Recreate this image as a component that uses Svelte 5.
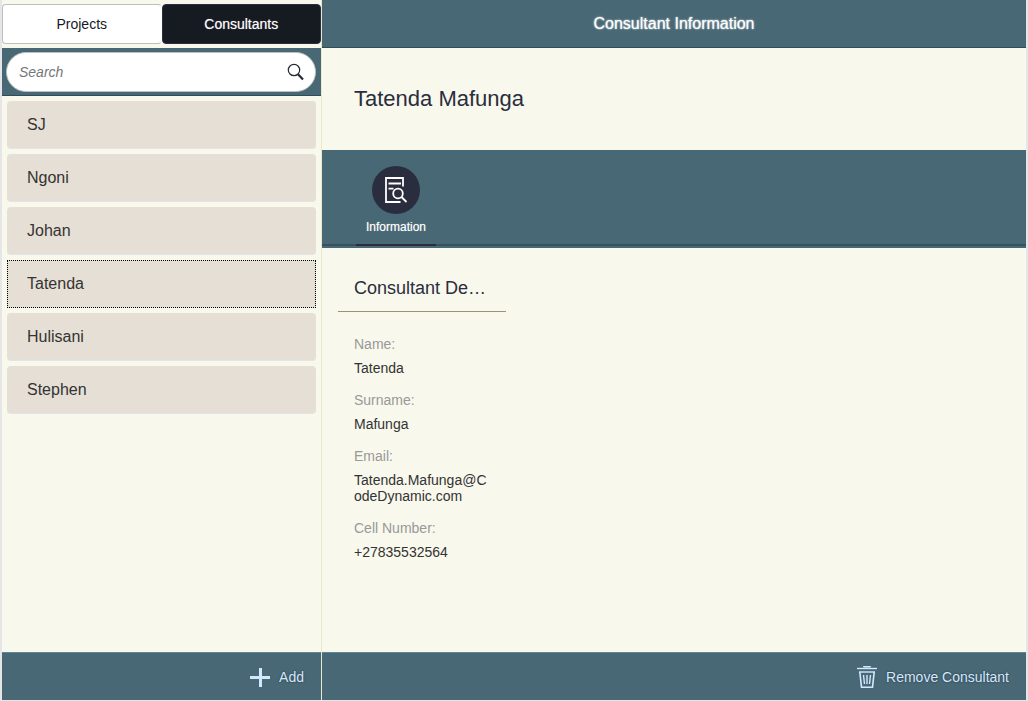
<script>
  let tab = $state('Consultants');
  let selected = $state('Tatenda');
  let query = $state('');
  const tabs = ['Projects', 'Consultants'];
  const people = ['SJ', 'Ngoni', 'Johan', 'Tatenda', 'Hulisani', 'Stephen'];
  const shown = $derived(people.filter((p) => p.toLowerCase().includes(query.toLowerCase())));
  const fields = [
    ['Name:', 'Tatenda'],
    ['Surname:', 'Mafunga'],
    ['Email:', 'Tatenda.Mafunga@CodeDynamic.com'],
    ['Cell Number:', '+27835532564']
  ];
</script>

<div class="app">
  <aside>
    <div class="tabs">
      {#each tabs as t}
        <button class:active={tab === t} onclick={() => (tab = t)}>{t}</button>
      {/each}
    </div>
    <div class="search-bar">
      <label class="search">
        <input type="search" placeholder="Search" aria-label="Search" bind:value={query} />
        <svg width="18" height="18" viewBox="0 0 18 18" fill="none" stroke="#222b33">
          <circle cx="8" cy="7" r="5.7" stroke-width="1.2" />
          <path d="M12 11.2 17 16.5" stroke-width="2.2" />
        </svg>
      </label>
    </div>
    <ul>
      {#each shown as p}
        <li><button class:selected={selected === p} onclick={() => (selected = p)}>{p}</button></li>
      {/each}
    </ul>
    <footer>
      <button class="add">
        <svg width="20" height="20" viewBox="0 0 20 20" stroke="#d1e8ff" stroke-width="3"><path d="M0 10.5H20M10.5 1V20" /></svg>
        Add
      </button>
    </footer>
  </aside>

  <main>
    <header><h1>Consultant Information</h1></header>
    <h2>Tatenda Mafunga</h2>
    <nav>
      <button class="info">
        <span class="disc">
          <svg width="24" height="28" viewBox="0 0 24 28" fill="none" stroke="#fff" stroke-width="1.8">
            <path d="M19 10.5V2H2V26H16.5M4.5 7.5H17M4.5 12.7H9.5" />
            <circle cx="14" cy="17.5" r="4.8" />
            <path d="M17.5 21 22.5 26" />
          </svg>
        </span>
        Information
      </button>
    </nav>
    <section>
      <h3>Consultant Details</h3>
      <dl>
        {#each fields as [label, value]}
          <dt>{label}</dt>
          <dd>{value}</dd>
        {/each}
      </dl>
    </section>
    <footer>
      <button>
        <svg width="20" height="24" viewBox="0 0 20 24" fill="none" stroke="#d1e8ff">
          <path d="M7 2.5V1.8H13V2.5" stroke-width="1.6" />
          <path d="M0 3.5H20" stroke-width="1.4" />
          <path d="M2 7H18" stroke-width="1.4" />
          <path d="M2.8 7 4.5 22.2H15.5L17.2 7" stroke-width="1.6" />
          <path d="M6.5 10 7.5 19M10 10V19M13.5 10 12.5 19" stroke-width="1.4" />
        </svg>
        Remove Consultant
      </button>
    </footer>
  </main>
</div>

<style>
  :global(body) {
    margin: 0;
    background: #e6e6e8;
  }
  .app {
    box-sizing: border-box;
    min-height: 100vh;
    padding: 0 2px 1px;
    display: grid;
    grid-template-columns: 320px minmax(0, 1fr);
    font-family: 'Liberation Sans', Arial, sans-serif;
    font-size: 14px;
    color: #333;
  }
  button,
  input {
    box-sizing: border-box;
    font: inherit;
    cursor: pointer;
  }
  aside,
  main {
    display: flex;
    flex-direction: column;
    background: #f8f8ec;
  }
  aside {
    border-right: 1px solid #e8e9cf;
  }
  .tabs {
    display: flex;
    padding: 4px 0;
  }
  .tabs button {
    flex: 1;
    height: 40px;
    padding: 0;
    border: 1px solid #bfbfbf;
    border-radius: 4px;
    background: #fff;
    color: #16191f;
  }
  .tabs button:first-child {
    border-right-color: #fff;
  }
  .tabs .active {
    background: #161a21;
    border-color: #2a2d3d;
    color: #fff;
    text-shadow: 0 0 1px rgba(255, 255, 255, 0.5);
  }
  .search-bar {
    box-sizing: border-box;
    height: 48px;
    padding: 4px 5px 3px 4px;
    background: #476874;
    border-bottom: 1px solid #2f4c5a;
  }
  .search {
    box-sizing: border-box;
    height: 40px;
    display: flex;
    align-items: center;
    padding: 0 11px 0 12px;
    background: #fff;
    border: 1px solid #bfbfbf;
    border-radius: 20px;
  }
  .search input {
    flex: 1;
    min-width: 0;
    padding: 0;
    border: 0;
    outline: 0;
    background: none;
    appearance: none;
    cursor: text;
  }
  .search input::placeholder {
    color: #74777a;
    font-style: italic;
  }
  ul {
    flex: 1;
    list-style: none;
    margin: 0;
    padding: 5px;
    display: flex;
    flex-direction: column;
    gap: 5px;
  }
  li {
    display: flex;
  }
  li button {
    flex: 1;
    height: 48px;
    padding: 0 20px;
    border: 0;
    border-bottom: 1px solid #e4e4e6;
    border-radius: 4px;
    background: #e6dfd5;
    color: #333;
    font-size: 16px;
    text-align: left;
  }
  li .selected {
    border-radius: 0;
    outline: 1px dotted #000;
    outline-offset: -1px;
  }
  footer {
    box-sizing: border-box;
    height: 48px;
    display: flex;
    justify-content: flex-end;
    align-items: center;
    padding: 0 17px;
    background: #476874;
    border-top: 1px solid #5c8798;
  }
  footer button {
    display: flex;
    align-items: center;
    gap: 9px;
    padding: 0;
    border: 0;
    background: none;
    color: #d1e8ff;
    text-shadow: 0 0 2px #2a2d3d;
  }
  header {
    box-sizing: border-box;
    height: 48px;
    display: flex;
    align-items: center;
    justify-content: center;
    background: #476874;
    border-bottom: 1px solid #2f4c5a;
  }
  h1 {
    margin: 0;
    font-size: 16px;
    font-weight: 400;
    color: #fff;
    text-shadow: 0 0 2px #fff;
  }
  h2 {
    margin: 0;
    padding: 36px 32px;
    font-size: 22px;
    line-height: 30px;
    font-weight: 400;
    color: #2a2d3d;
  }
  nav {
    box-sizing: border-box;
    height: 98px;
    display: flex;
    padding: 0 34px;
    background: linear-gradient(#476874 94px, #34535f 94px, #34535f 96px, #476874 96px);
  }
  .info {
    width: 80px;
    height: 96px;
    display: flex;
    flex-direction: column;
    align-items: center;
    gap: 6px;
    padding: 16px 0 0;
    border: 0;
    border-bottom: 2px solid #2a2d3d;
    background: none;
    color: #fff;
    font-size: 12px;
    text-shadow: 0 0 1px rgba(255, 255, 255, 0.5);
  }
  .disc {
    width: 48px;
    height: 48px;
    display: flex;
    align-items: center;
    justify-content: center;
    border-radius: 50%;
    background: #2a2d3d;
  }
  section {
    flex: 1;
    width: 168px;
    padding: 16px;
  }
  h3 {
    margin: 0;
    padding: 2px 16px 0;
    border-bottom: 1px solid #999475;
    font-size: 18px;
    line-height: 45px;
    font-weight: 400;
    color: #2a2d3d;
    white-space: nowrap;
    overflow: hidden;
    text-overflow: ellipsis;
  }
  dl {
    margin: 0;
    padding: 20px 16px 0;
    line-height: 16px;
  }
  dt {
    padding: 4px 0;
    color: #999;
  }
  dd {
    margin: 0;
    padding: 4px 0 12px;
    overflow-wrap: anywhere;
  }
  dd + dt {
    padding-top: 0;
    margin-top: 4px;
  }
</style>
